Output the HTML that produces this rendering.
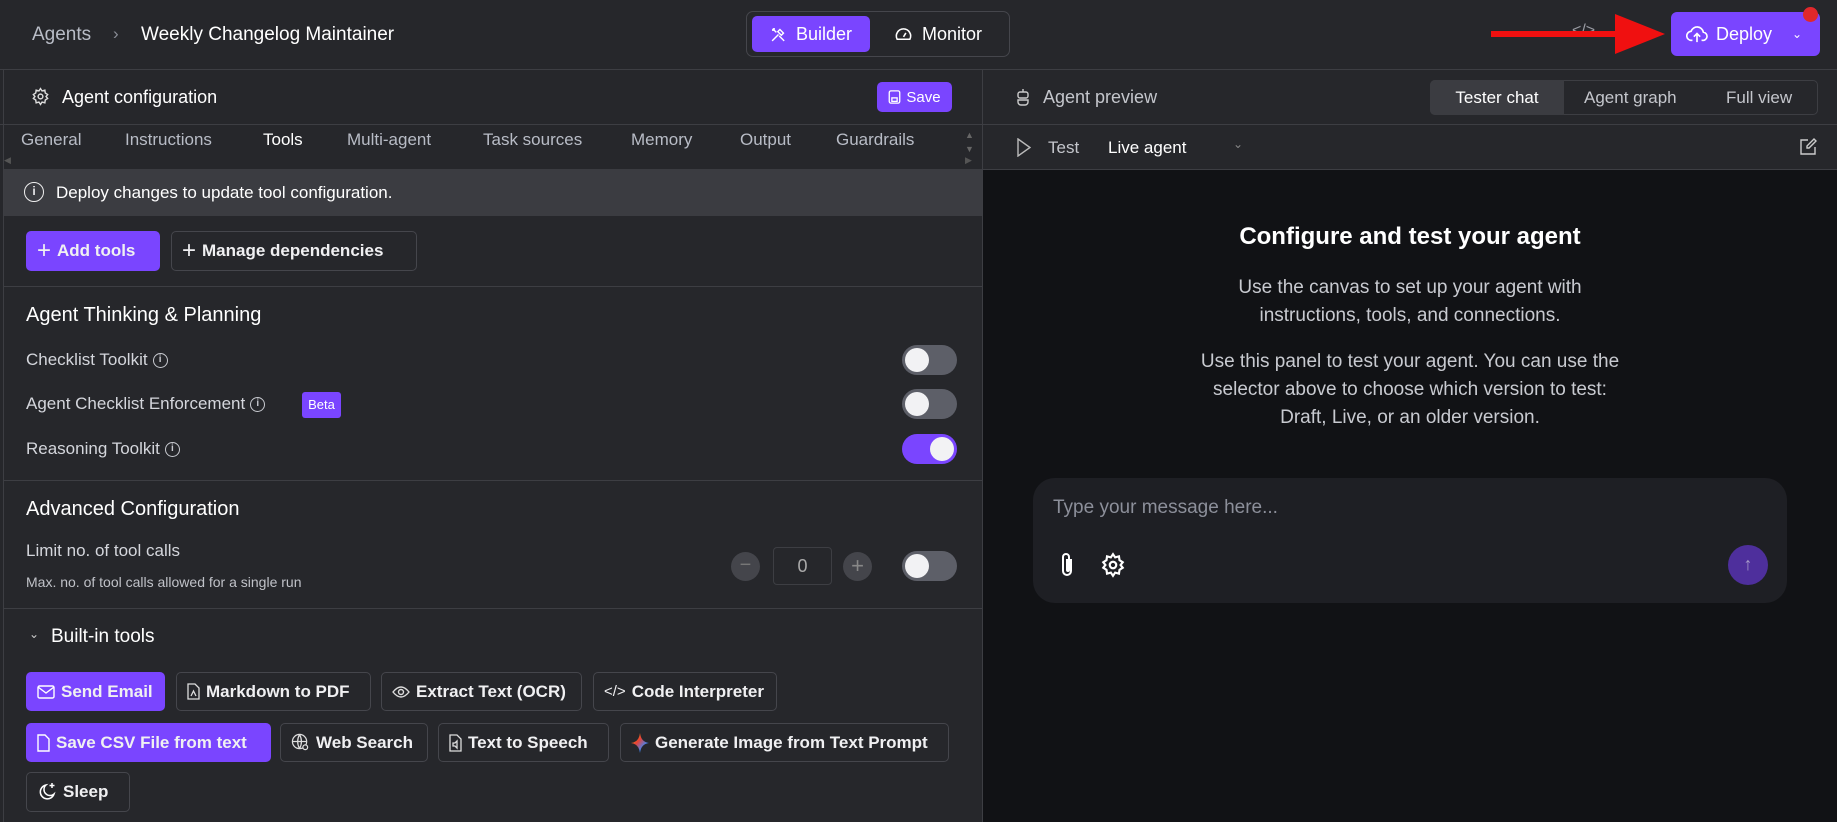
<!DOCTYPE html>
<html><head><meta charset="utf-8"><style>
*{box-sizing:border-box;margin:0;padding:0}
body{width:1837px;height:822px;background:#26272b;color:#e8e8ea;font-family:"Liberation Sans",sans-serif;position:relative;overflow:hidden}
.a{position:absolute;white-space:nowrap}
.hl{position:absolute;height:1px;background:#3d3e43}
.btn{position:absolute;border:1px solid #45464c;border-radius:5px;display:flex;align-items:center;gap:6px;padding:0 10px;font-size:17px;font-weight:bold;color:#f0f0f2;background:#26272b}
.pur{background:#7a45ff;border-color:#7a45ff}
.tog{position:absolute;width:55px;height:30px;border-radius:15px;background:#5d5f68}
.tog::after{content:"";position:absolute;left:3px;top:3px;width:24px;height:24px;border-radius:12px;background:#f2f2f4}
.tog.on{background:#7a45ff}.tog.on::after{left:28px}
.tab{position:absolute;top:130px;font-size:17px;color:#b8bcc6}
.lbl{font-size:17px;color:#d4d6dc;display:flex;align-items:center}
.i{display:inline-block;width:15px;height:15px;border:1.5px solid #c8cad0;border-radius:50%;font-size:10px;text-align:center;line-height:12px;margin-left:5px;color:#c8cad0;font-weight:bold}
svg{display:block}
</style></head><body>
<div class="a" style="left:3px;top:69px;width:1px;height:753px;background:#3d3e43"></div>
<div class="a" style="left:32px;top:24px;font-size:19px;color:#b8bcc6">Agents</div>
<div class="a" style="left:113px;top:24px;font-size:17px;color:#8a8d96">›</div>
<div class="a" style="left:141px;top:24px;font-size:19px;color:#fff">Weekly Changelog Maintainer</div>
<div class="a" style="left:746px;top:11px;width:264px;height:46px;border:1px solid #45464c;border-radius:7px"></div>
<div class="a" style="left:752px;top:16px;width:118px;height:36px;background:#7a45ff;border-radius:5px;display:flex;align-items:center;justify-content:center;gap:9px;font-size:18px;color:#fff">
<svg width="17" height="17" viewBox="0 0 24 24" fill="none" stroke="#fff" stroke-width="2"><path d="M3 21l9-9M14 5l5 5-3 3-5-5zM4 4l5 5M4 4l3 0M4 4l0 3M13 14l7 7"/></svg>Builder</div>
<div class="a" style="left:894px;top:16px;height:36px;display:flex;align-items:center;gap:9px;font-size:18px;color:#fff">
<svg width="19" height="19" viewBox="0 0 24 24" fill="none" stroke="#fff" stroke-width="2"><path d="M4 18a9 9 0 1 1 16 0z"/><path d="M12 15l3-5"/></svg>Monitor</div>
<div class="a" style="left:1572px;top:22px;font-size:16px;color:#9a9ca4">&lt;/&gt;</div>
<div class="a" style="left:1622px;top:20px;font-size:16px;color:#9a9ca4">↺</div>
<div class="a" style="left:1491px;top:31px;width:130px;height:6px;background:#f01010"></div>
<svg class="a" style="left:1615px;top:14px" width="52" height="40"><polygon points="0,0 50,20 0,40" fill="#f01010"/></svg>
<div class="a" style="left:1671px;top:12px;width:149px;height:44px;background:#7a45ff;border-radius:6px;display:flex;align-items:center;padding-left:15px;gap:8px;font-size:18px;color:#fff">
<svg width="22" height="20" viewBox="0 0 24 22" fill="none" stroke="#fff" stroke-width="1.8"><path d="M7 18H6a5 5 0 0 1-.5-10A7 7 0 0 1 19 9a4.5 4.5 0 0 1-1 9h-1"/><path d="M12 20v-9M8.5 14l3.5-3.5 3.5 3.5"/></svg>Deploy<span style="font-size:12px;margin-left:12px">⌄</span></div>
<div class="a" style="left:1803px;top:7px;width:15px;height:15px;border-radius:50%;background:#e0282c"></div>
<div class="hl" style="left:0;top:69px;width:1837px"></div>
<svg class="a" style="left:31px;top:87px" width="19" height="19" viewBox="0 0 24 24" fill="none" stroke="#ddd" stroke-width="1.8"><circle cx="12" cy="12" r="3"/><path d="M12 2l2 3 3.5-1 .5 3.5 3 2-2 2.5 2 2.5-3 2-.5 3.5-3.5-1-2 3-2-3-3.5 1-.5-3.5-3-2 2-2.5-2-2.5 3-2L6.5 4 10 5z"/></svg>
<div class="a" style="left:62px;top:87px;font-size:18px;color:#fff">Agent configuration</div>
<div class="a" style="left:877px;top:82px;width:75px;height:30px;background:#7a45ff;border-radius:5px;display:flex;align-items:center;justify-content:center;gap:5px;font-size:15px;color:#fff">
<svg width="13" height="14" viewBox="0 0 14 16" fill="none" stroke="#fff" stroke-width="1.5"><rect x="1" y="1" width="12" height="14" rx="2"/><rect x="4" y="9" width="6" height="4"/></svg>Save</div>
<div class="hl" style="left:0;top:124px;width:982px"></div>
<div class="tab" style="left:21px">General</div>
<div class="tab" style="left:125px">Instructions</div>
<div class="tab" style="left:263px;color:#fff">Tools</div>
<div class="tab" style="left:347px">Multi-agent</div>
<div class="tab" style="left:483px">Task sources</div>
<div class="tab" style="left:631px">Memory</div>
<div class="tab" style="left:740px">Output</div>
<div class="tab" style="left:836px">Guardrails</div>
<div class="a" style="left:965px;top:128px;font-size:9px;color:#666;line-height:14px">▲<br>▼</div>
<div class="a" style="left:4px;top:155px;font-size:9px;color:#555">◀</div>
<div class="a" style="left:965px;top:155px;font-size:9px;color:#555">▶</div>
<div class="a" style="left:4px;top:169px;width:978px;height:47px;background:#3b3c41"></div>
<div class="a" style="left:24px;top:182px;width:20px;height:20px;border:1.6px solid #eee;border-radius:50%;font-size:12px;text-align:center;line-height:17px;font-weight:bold">i</div>
<div class="a" style="left:56px;top:183px;font-size:17px;color:#fff">Deploy changes to update tool configuration.</div>
<div class="btn pur" style="left:26px;top:231px;width:134px;height:40px"><span style="font-size:24px;font-weight:normal">+</span>Add tools</div>
<div class="btn" style="left:171px;top:231px;width:246px;height:40px"><span style="font-size:24px;font-weight:normal">+</span>Manage dependencies</div>
<div class="hl" style="left:4px;top:286px;width:978px"></div>
<div class="a" style="left:26px;top:304px;font-size:20px;color:#fff">Agent Thinking &amp; Planning</div>
<div class="a lbl" style="left:26px;top:350px">Checklist Toolkit<span class="i">i</span></div>
<div class="a lbl" style="left:26px;top:394px">Agent Checklist Enforcement<span class="i">i</span></div>
<div class="a" style="left:302px;top:392px;width:39px;height:26px;background:#7a45ff;border-radius:3px;font-size:13px;color:#fff;text-align:center;line-height:26px">Beta</div>
<div class="a lbl" style="left:26px;top:439px">Reasoning Toolkit<span class="i">i</span></div>
<div class="tog" style="left:902px;top:345px"></div>
<div class="tog" style="left:902px;top:389px"></div>
<div class="tog on" style="left:902px;top:434px"></div>
<div class="hl" style="left:4px;top:480px;width:978px"></div>
<div class="a" style="left:26px;top:498px;font-size:20px;color:#fff">Advanced Configuration</div>
<div class="a lbl" style="left:26px;top:541px">Limit no. of tool calls</div>
<div class="a" style="left:26px;top:574px;font-size:14px;color:#c0c2c8">Max. no. of tool calls allowed for a single run</div>
<div class="a" style="left:731px;top:552px;width:29px;height:29px;border-radius:50%;background:#44454b;color:#777;text-align:center;line-height:27px;font-size:20px">−</div>
<div class="a" style="left:773px;top:547px;width:59px;height:38px;border:1px solid #3d3e43;border-radius:4px;color:#aaa;text-align:center;line-height:36px;font-size:18px">0</div>
<div class="a" style="left:843px;top:552px;width:29px;height:29px;border-radius:50%;background:#44454b;color:#888;text-align:center;line-height:27px;font-size:22px">+</div>
<div class="tog" style="left:902px;top:551px"></div>
<div class="hl" style="left:4px;top:608px;width:978px"></div>
<div class="a" style="left:29px;top:627px;font-size:12px;color:#ccc">⌄</div>
<div class="a" style="left:51px;top:626px;font-size:19px;color:#fff">Built-in tools</div>
<div class="btn pur" style="left:26px;top:672px;width:139px;height:39px"><svg width="18" height="14" viewBox="0 0 18 14" fill="none" stroke="#fff" stroke-width="1.4"><rect x="1" y="1" width="16" height="12" rx="1.5"/><path d="M1 2l8 6 8-6"/></svg>Send Email</div>
<div class="btn" style="left:176px;top:672px;width:195px;height:39px"><svg width="13" height="17" viewBox="0 0 13 17" fill="none" stroke="#ddd" stroke-width="1.3"><path d="M1 1h7l4 4v11H1z"/><path d="M4 13l2.5-5 2.5 5"/></svg>Markdown to PDF</div>
<div class="btn" style="left:381px;top:672px;width:201px;height:39px"><svg width="18" height="14" viewBox="0 0 18 14" fill="none" stroke="#ddd" stroke-width="1.4"><path d="M1 7q8-10 16 0q-8 10-16 0z"/><circle cx="9" cy="7" r="2.5"/></svg>Extract Text (OCR)</div>
<div class="btn" style="left:593px;top:672px;width:184px;height:39px"><span style="font-weight:normal;font-size:15px">&lt;/&gt;</span>Code Interpreter</div>
<div class="btn pur" style="left:26px;top:723px;width:245px;height:39px"><svg width="13" height="18" viewBox="0 0 13 18" fill="none" stroke="#fff" stroke-width="1.4"><path d="M1 1h7l4 4v12H1z"/></svg>Save CSV File from text</div>
<div class="btn" style="left:280px;top:723px;width:148px;height:39px"><svg width="19" height="19" viewBox="0 0 20 20" fill="none" stroke="#ddd" stroke-width="1.3"><circle cx="9" cy="9" r="7.5"/><path d="M1.5 9h15M9 1.5q-4 7.5 0 15M9 1.5q4 7.5 0 15"/><circle cx="15" cy="15" r="2.5" fill="#26272b"/></svg>Web Search</div>
<div class="btn" style="left:438px;top:723px;width:171px;height:39px"><svg width="13" height="18" viewBox="0 0 13 18" fill="none" stroke="#ddd" stroke-width="1.3"><path d="M1 1h7l4 4v12H1z"/><path d="M4 9v3h2l2 2V7L6 9z"/></svg>Text to Speech</div>
<div class="btn" style="left:620px;top:723px;width:329px;height:39px"><svg width="18" height="20" viewBox="0 0 18 20"><defs><linearGradient id="g" x1="0" y1="0" x2="1" y2="1"><stop offset="0" stop-color="#f4b400"/><stop offset=".4" stop-color="#e94235"/><stop offset=".7" stop-color="#4285f4"/><stop offset="1" stop-color="#34a853"/></linearGradient></defs><path d="M9 0Q10 9 18 10Q10 11 9 20Q8 11 0 10Q8 9 9 0z" fill="url(#g)"/></svg>Generate Image from Text Prompt</div>
<div class="btn" style="left:26px;top:772px;width:104px;height:40px"><svg width="20" height="20" viewBox="0 0 20 20" fill="none" stroke="#fff" stroke-width="1.5"><path d="M9 3a7 7 0 1 0 8 9a6 6 0 0 1-8-9z"/><path d="M15 1v5M12.5 3.5h5"/></svg>Sleep</div>
<div class="a" style="left:982px;top:69px;width:1px;height:753px;background:#3d3e43"></div>
<svg class="a" style="left:1016px;top:88px" width="14" height="18" viewBox="0 0 14 18" fill="none" stroke="#ccc" stroke-width="1.4"><rect x="2" y="4" width="10" height="6" rx="2"/><path d="M7 1v3M2 12h10v2a3 3 0 0 1-3 3H5a3 3 0 0 1-3-3z"/></svg>
<div class="a" style="left:1043px;top:87px;font-size:18px;color:#c4c6cc">Agent preview</div>
<div class="a" style="left:1430px;top:80px;width:388px;height:35px;border:1px solid #3d3e43;border-radius:5px"></div>
<div class="a" style="left:1430px;top:80px;width:134px;height:35px;background:#3b3c41;border-radius:5px 0 0 5px;text-align:center;line-height:35px;font-size:17px;color:#fff">Tester chat</div>
<div class="a" style="left:1584px;top:88px;font-size:17px;color:#c4c6cc">Agent graph</div>
<div class="a" style="left:1726px;top:88px;font-size:17px;color:#c4c6cc">Full view</div>
<div class="hl" style="left:983px;top:124px;width:854px"></div>
<svg class="a" style="left:1017px;top:138px" width="14" height="19" viewBox="0 0 14 19" fill="none" stroke="#bbb" stroke-width="1.4"><path d="M1 1l12 8.5L1 18z"/></svg>
<div class="a" style="left:1048px;top:138px;font-size:17px;color:#c4c6cc">Test</div>
<div class="a" style="left:1108px;top:138px;font-size:17px;color:#fff">Live agent</div>
<div class="a" style="left:1233px;top:137px;font-size:12px;color:#888">⌄</div>
<svg class="a" style="left:1800px;top:138px" width="17" height="17" viewBox="0 0 17 17" fill="none" stroke="#ccc" stroke-width="1.4"><path d="M8 2H1v14h14V9"/><path d="M14 1l2 2-7 7H7V8z"/></svg>
<div class="hl" style="left:983px;top:169px;width:854px"></div>
<div class="a" style="left:983px;top:170px;width:854px;height:652px;background:#111215"></div>
<div class="a" style="left:983px;top:223px;width:854px;text-align:center;font-size:24px;font-weight:bold;color:#fff">Configure and test your agent</div>
<div class="a" style="left:983px;top:274px;width:854px;text-align:center;font-size:19px;line-height:28px;color:#c8cad0;white-space:normal">Use the canvas to set up your agent with<br>instructions, tools, and connections.</div>
<div class="a" style="left:983px;top:348px;width:854px;text-align:center;font-size:19px;line-height:28px;color:#c8cad0;white-space:normal">Use this panel to test your agent. You can use the<br>selector above to choose which version to test:<br>Draft, Live, or an older version.</div>
<div class="a" style="left:1033px;top:478px;width:754px;height:125px;background:#1e1f24;border-radius:22px"></div>
<div class="a" style="left:1053px;top:497px;font-size:19px;color:#8c8f9a">Type your message here...</div>
<svg class="a" style="left:1056px;top:551px" width="22" height="28" viewBox="0 0 22 28" fill="none" stroke="#fff" stroke-width="2"><path d="M15 8v12a4 4 0 0 1-8 0V6a3 3 0 0 1 6 0v13a1 1 0 0 1-2 0V8"/></svg>
<svg class="a" style="left:1100px;top:552px" width="26" height="26" viewBox="0 0 24 24" fill="none" stroke="#fff" stroke-width="2"><circle cx="12" cy="12" r="3"/><path d="M12 2l2 3 3.5-1 .5 3.5 3 2-2 2.5 2 2.5-3 2-.5 3.5-3.5-1-2 3-2-3-3.5 1-.5-3.5-3-2 2-2.5-2-2.5 3-2L6.5 4 10 5z"/></svg>
<div class="a" style="left:1728px;top:545px;width:40px;height:40px;border-radius:50%;background:#4e2f9c;color:#a79bc9;text-align:center;line-height:38px;font-size:18px">↑</div>
</body></html>
